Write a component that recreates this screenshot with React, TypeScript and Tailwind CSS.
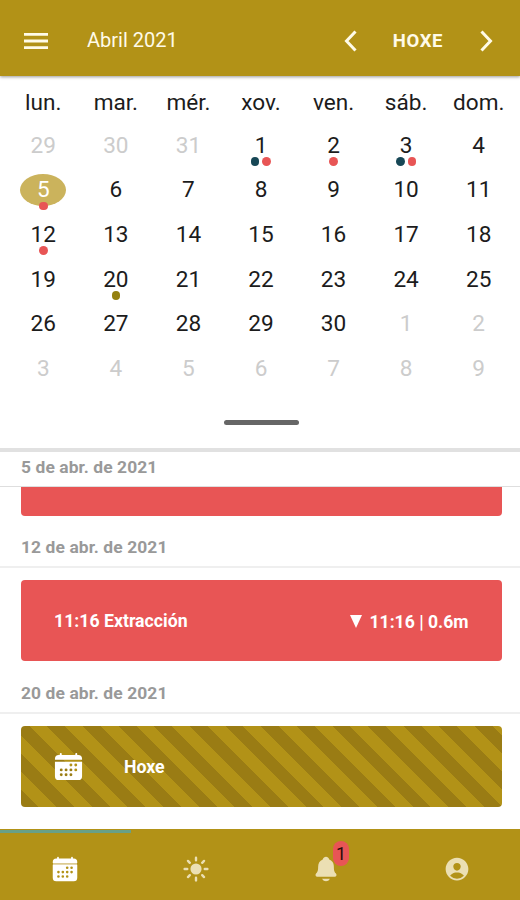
import clsx from 'clsx'
import { IoCalendar, IoNotifications, IoPersonCircle, IoSunny } from 'react-icons/io5'

interface Day {
  label: number
  outside?: boolean
  selected?: boolean
  dots?: Array<'tide' | 'extraction' | 'today'>
}

const WEEKDAYS = ['lun.', 'mar.', 'mér.', 'xov.', 'ven.', 'sáb.', 'dom.']

const DOT_COLORS = {
  tide: 'bg-[#174756]',
  extraction: 'bg-[#e85555]',
  today: 'bg-[#94800f]',
}

const MARKS: Record<number, Day['dots']> = {
  1: ['tide', 'extraction'],
  2: ['extraction'],
  3: ['tide', 'extraction'],
  5: ['extraction'],
  12: ['extraction'],
  20: ['today'],
}

const days: Day[] = [
  ...[29, 30, 31].map(label => ({ label, outside: true })),
  ...Array.from({ length: 30 }, (_, i) => ({ label: i + 1, selected: i + 1 === 5, dots: MARKS[i + 1] })),
  ...Array.from({ length: 9 }, (_, i) => ({ label: i + 1, outside: true })),
]

function Header() {
  return (
    <header className="relative z-10 flex h-[76px] shrink-0 items-center bg-[#b29217] pt-[6px] pl-6 text-[#fffbe8] shadow-[0_1px_3px_rgba(0,0,0,0.4)]">
      <button aria-label="Menú">
        <svg width="24" height="16" viewBox="0 0 24 16" fill="currentColor">
          <path d="M0 0h24v2.8H0zM0 6.6h24v2.8H0zM0 13.2h24V16H0z" />
        </svg>
      </button>
      <h1 className="ml-[39px] pb-[2px] text-[20px] leading-6">Abril 2021</h1>
      <div className="mr-[27px] ml-auto flex items-center">
        <svg width="13" height="22" viewBox="0 0 13 22" fill="none" stroke="currentColor" strokeWidth="3">
          <path d="M11.5 1.5 2.5 11l9 9.5" />
        </svg>
        <span className="mr-[37px] ml-9 text-[18.5px] leading-6 font-bold tracking-[0.6px]">HOXE</span>
        <svg width="13" height="22" viewBox="0 0 13 22" fill="none" stroke="currentColor" strokeWidth="3">
          <path d="m1.5 1.5 9 9.5-9 9.5" />
        </svg>
      </div>
    </header>
  )
}

function DayCell({ day }: { day: Day }) {
  return (
    <div className="flex h-[44.7px] items-start justify-center pt-[6px]">
      <div
        className={clsx(
          'relative flex h-8 w-[46px] items-center justify-center rounded-[50%] pt-px text-[22.6px]',
          day.outside && 'text-[#cccccc]',
          day.selected && 'bg-[#cbb35c] text-white',
        )}
      >
        {day.label}
        {day.dots && (
          <div className="absolute inset-x-0 top-7 flex justify-center gap-[3px]">
            {day.dots.map(dot => (
              <span key={dot} className={clsx('size-[8.5px] rounded-full', DOT_COLORS[dot])} />
            ))}
          </div>
        )}
      </div>
    </div>
  )
}

function Calendar() {
  return (
    <section className="h-[376px] shrink-0 border-b-4 border-[#e1e1e1] pr-[5px] pl-[7px] text-[#1c1c1c]">
      <div className="grid h-[47px] grid-cols-7 pt-3 text-center text-[22.6px] leading-[30px]">
        {WEEKDAYS.map(name => (
          <div key={name}>{name}</div>
        ))}
      </div>
      <div className="grid grid-cols-7">
        {days.map((day, i) => (
          <DayCell key={i} day={day} />
        ))}
      </div>
      <div className="mx-auto mt-[29px] h-[5px] w-[75px] rounded-full bg-[#666]" />
    </section>
  )
}

function DateLabel({ children }: { children: string }) {
  return (
    <div className="flex h-[41px] items-center border-b-2 border-[#efefef] pt-px pl-[21px] text-[17.4px] font-bold tracking-[0.1px] text-[#999]">
      {children}
    </div>
  )
}

function Agenda() {
  return (
    <section className="min-h-0 flex-1">
      <div className="flex h-[35px] items-center border-b border-[#dedede] pb-[3px] pl-[21px] text-[17.4px] font-bold tracking-[0.1px] text-[#999]">
        5 de abr. de 2021
      </div>
      <div className="mr-[18px] ml-[21px] h-[28.5px] rounded-b bg-[#e85555]" />

      <div className="pt-[11.5px]">
        <DateLabel>12 de abr. de 2021</DateLabel>
      </div>
      <div className="mt-3 mr-[18.5px] ml-[21px] flex h-[81px] items-center justify-between rounded bg-[#e85555] pr-[33px] pl-[33px] font-bold text-white">
        <span className="pt-[2px] text-[17.7px]">11:16 Extracción</span>
        <span className="flex items-center pt-[3px] text-[17.6px]">
          <svg className="mr-[7px]" width="12" height="13" viewBox="0 0 12 13" fill="currentColor">
            <path d="M0 0h12L6 13z" />
          </svg>
          11:16 | 0.6m
        </span>
      </div>

      <div className="pt-3">
        <DateLabel>20 de abr. de 2021</DateLabel>
      </div>
      <div className="mt-3 mr-[18.5px] ml-[21px] flex h-[81px] items-center rounded bg-[repeating-linear-gradient(45deg,#9a7c14_0px,#9a7c14_12.6px,#b29217_12.6px,#b29217_25.2px)] pl-8 font-bold text-white">
        <IoCalendar size={31} />
        <span className="ml-10 pt-[2px] text-[17.7px]">Hoxe</span>
      </div>
    </section>
  )
}

function TabBar() {
  return (
    <nav className="relative grid h-[71px] shrink-0 grid-cols-4 bg-[#b29217] pt-[9px] text-[#ebdfb3]">
      <span className="absolute top-px left-0 h-[3px] w-[131px] bg-[#69a087]" />
      <div className="flex items-center justify-center text-white">
        <div className="relative">
          <span className="absolute inset-x-[2px] top-[7px] h-[3px] bg-[#dccb92]" />
          <IoCalendar className="relative" size={28} />
        </div>
      </div>
      <div className="flex items-center justify-center pl-[2px]">
        <IoSunny size={28} />
      </div>
      <div className="flex items-center justify-center pl-[2px]">
        <div className="relative">
          <IoNotifications size={28} />
          <span className="absolute -top-[14px] left-[21px] flex h-[25px] w-4 items-center justify-center rounded-lg bg-[#e85555] text-[18px] text-[#2b0b0b]">
            1
          </span>
        </div>
      </div>
      <div className="flex items-center justify-center pl-[3px]">
        <IoPersonCircle size={28} />
      </div>
    </nav>
  )
}

export default function App() {
  return (
    <div className="flex h-screen flex-col overflow-hidden bg-white font-[Roboto,sans-serif]">
      <Header />
      <Calendar />
      <Agenda />
      <TabBar />
    </div>
  )
}
